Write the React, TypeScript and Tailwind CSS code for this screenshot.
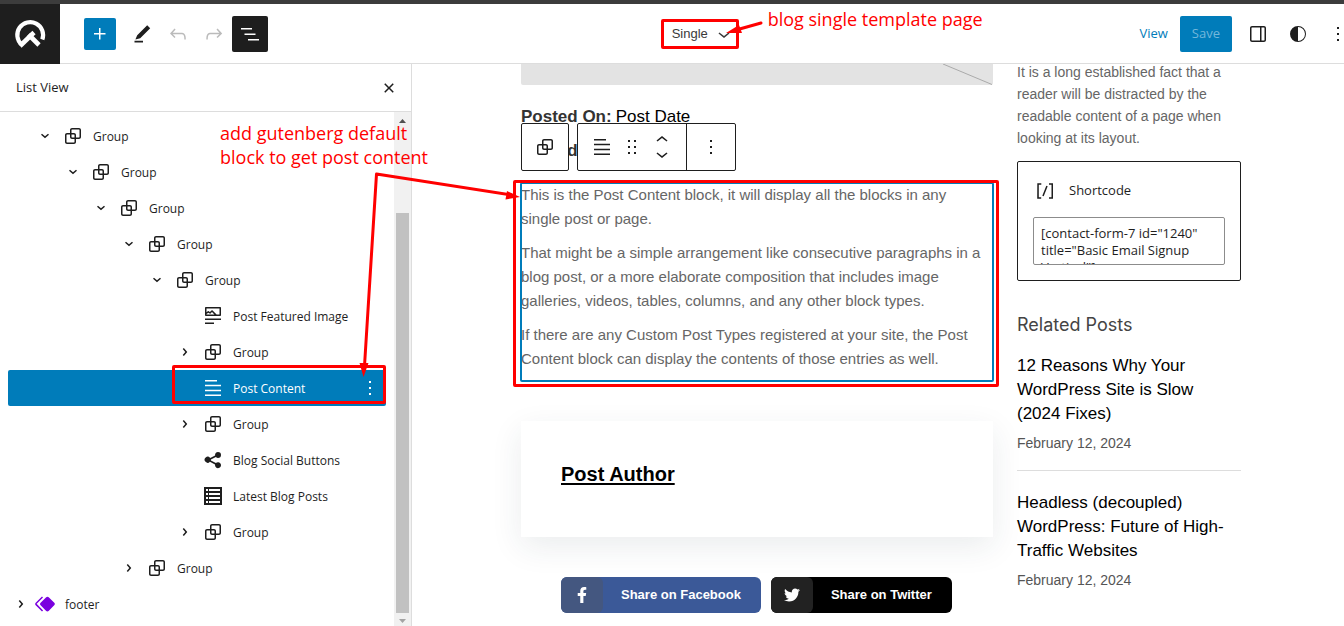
import type { ReactNode } from "react";
import { FaFacebookF, FaTwitter } from "react-icons/fa";

const paths = {
  group:
    "M18 4h-7c-1.1 0-2 .9-2 2v3H6c-1.1 0-2 .9-2 2v7c0 1.1.9 2 2 2h7c1.1 0 2-.9 2-2v-3h3c1.1 0 2-.9 2-2V6c0-1.1-.9-2-2-2zm-4.5 14c0 .3-.2.5-.5.5H6c-.3 0-.5-.2-.5-.5v-7c0-.3.2-.5.5-.5h3V13c0 1.1.9 2 2 2h2.5v3zm0-4.5H11c-.3 0-.5-.2-.5-.5v-2.5H13c.3 0 .5.2.5.5v2.5zm5-.5c0 .3-.2.5-.5.5h-3V11c0-1.1-.9-2-2-2h-2.5V6c0-.3.2-.5.5-.5h7c.3 0 .5.2.5.5v7z",
  content: "M4 20h16v-1.5H4V20zm0-4.8h16v-1.5H4v1.5zm0-6.4v1.5h16V8.8H4zM16 4H4v1.5h12V4z",
  featured:
    "M19 3H5c-.6 0-1 .4-1 1v7c0 .5.4 1 1 1h14c.5 0 1-.4 1-1V4c0-.6-.4-1-1-1zM5.5 10.5v-.4l1.8-1.3 1.3.8c.3.2.7.2.9-.1L11 8.1l2.4 2.4H5.5zm13 0h-2.9l-4-4c-.3-.3-.8-.3-1.1 0L8.9 8l-1.2-.8c-.3-.2-.6-.2-.9 0l-1.3 1V4.5h13v6zM4 20h9v-1.5H4V20zm0-4h16v-1.5H4V16z",
  symbol:
    "M21.3 10.8l-5.6-5.6c-.7-.7-1.8-.7-2.5 0l-5.6 5.6c-.7.7-.7 1.8 0 2.5l5.6 5.6c.3.3.8.5 1.2.5s.9-.2 1.2-.5l5.6-5.6c.8-.7.8-1.9.1-2.5zm-17.6 1L10 5.5l-1-1-6.3 6.3c-.7.7-.7 1.8 0 2.5L9 19.5l1.1-1.1-6.3-6.3c-.2 0-.2-.2-.1-.3z",
  share:
    "M17 4a3 3 0 0 1 0 6 3 3 0 0 1-2.1-.9l-5 2.5v.8l5 2.6A3 3 0 1 1 14 17v-.6l-5.1-2.7A3 3 0 1 1 9 9.8l.2.3 4.9-2.5A3 3 0 0 1 17 4z",
  table:
    "M3 3h18v18H3V3zm2 2v2h2V5H5zm3 0v2h11V5H8zM5 9v2h2V9H5zm3 0v2h11V9H8zm-3 4v2h2v-2H5zm3 0v2h11v-2H8zm-3 4v2h2v-2H5zm3 0v2h11v-2H8z",
  plus: "M11 12.5V17.5H12.5V12.5H17.5V11H12.5V6H11V11H6V12.5H11Z",
  edit: "m20.200 6.200-3-3-10 10-1.800 4.300 4.800-1.300L20.200 6.200Zm-7.200 12.500H4.500v1.800H13v-1.800Z",
  undo: "M18.3 11.7c-.6-.6-1.4-.9-2.3-.9H6.7l2.9-3.3-1.1-1-4.5 5L8.5 16l1-1-2.7-2.7H16c.5 0 .9.2 1.3.5 1 1 1 3.4 1 4.5v.3h1.5v-.2c0-1.5 0-4.3-1.5-5.7z",
  redo: "M15.6 6.5l-1.1 1 2.9 3.3H8c-.9 0-1.7.3-2.3.9-1.4 1.5-1.4 4.2-1.4 5.6v.2h1.5v-.3c0-1.1 0-3.5 1-4.5.3-.3.7-.5 1.3-.5h9.2L14.5 15l1.1 1.1 4.6-4.6-4.6-5z",
  list: "M3 6h11v1.5H3V6Zm3.5 5.5h11V13h-11v-1.5ZM21 17H10v1.5h11V17Z",
  close:
    "M12 13.06l3.712 3.713 1.061-1.06L13.061 12l3.712-3.712-1.06-1.06L12 10.938 8.288 7.227l-1.061 1.06L10.939 12l-3.712 3.712 1.06 1.061L12 13.061z",
  drag: "M8 7h2V5H8v2zm0 6h2v-2H8v2zm0 6h2v-2H8v2zm6-14v2h2V5h-2zm0 8h2v-2h-2v2zm0 6h2v-2h-2v2z",
  up: "M6.5 12.4L12 8l5.5 4.4-.9 1.2L12 10l-4.5 3.6-1-1.2z",
  down: "M17.5 11.6L12 16l-5.5-4.4.9-1.2L12 14l4.5-3.6 1 1.2z",
  more: "M13 19h-2v-2h2v2zm0-6h-2v-2h2v2zm0-6h-2V5h2v2z",
  right:
    "M10.86 8.04L14.28 12.03L10.86 16.02L9.72 15.04L12.3 12.03L9.72 9.02L10.86 8.04Z",
  smallDown:
    "M8.01 10.86L12 14.28L15.99 10.86L15.01 9.72L12 12.3L8.99 9.72L8.01 10.86Z",
  shortcode:
    "M16 4.2v1.5h2.5v12.5H16v1.5h4V4.2h-4zM4.2 19.8h4v-1.5H5.8V5.8h2.5V4.2h-4l-.1 15.6zm5.1-3.1l1.4.6 4-10-1.4-.6-4 10z",
  sidebar:
    "M18 4H6c-1.1 0-2 .9-2 2v12c0 1.1.9 2 2 2h12c1.1 0 2-.9 2-2V6c0-1.1-.9-2-2-2zm-4 14.5H6c-.3 0-.5-.2-.5-.5V6c0-.3.2-.5.5-.5h8v13zm4.5-.5c0 .3-.2.5-.5.5h-2.5v-13H18c.3 0 .5.2.5.5v12z",
  styles: "M12 4a8 8 0 1 0 0 16 8 8 0 0 0 0-16zm0 15V5a7 7 0 0 1 0 14z",
};

type IconName = keyof typeof paths;

function Icon({ name, className = "" }: { name: IconName; className?: string }) {
  return (
    <svg viewBox="0 0 24 24" className={`size-6 shrink-0 fill-current ${className}`} aria-hidden="true">
      <path fillRule="evenodd" d={paths[name]} />
    </svg>
  );
}

function IconButton({ name, label, className = "" }: { name: IconName; label: string; className?: string }) {
  return (
    <button type="button" aria-label={label} className={`flex items-center justify-center rounded-xs ${className}`}>
      <Icon name={name} />
    </button>
  );
}

function Header() {
  return (
    <header className="flex h-[60px] shrink-0 items-center justify-between border-b border-[#ddd] bg-white">
      <div className="flex items-center">
        <a href="#site" aria-label="Site" className="flex size-[60px] items-center justify-center bg-[#1e1e1e]">
          <svg viewBox="0 0 60 60" className="size-[60px]" fill="none" stroke="#fff" strokeWidth="4.2" aria-hidden="true">
            <path d="M21.500 40.500A12.900 12.900 0 1 1 42.300 35.500" />
            <path d="M20 42L34 28.500" strokeWidth="4.600" />
            <path d="M28.500 30.500L39 41" strokeWidth="4.600" />
          </svg>
        </a>
        <div className="flex items-center gap-2 pl-6">
          <IconButton name="plus" label="Add block" className="size-8 bg-[#007cba] text-white" />
          <div className="flex">
            <IconButton name="edit" label="Tools" className="size-9" />
            <IconButton name="undo" label="Undo" className="size-9 text-[#bbb]" />
            <IconButton name="redo" label="Redo" className="size-9 text-[#bbb]" />
            <IconButton name="list" label="List View" className="size-9 bg-[#1e1e1e] text-white" />
          </div>
        </div>
      </div>

      <div className="relative">
        <button
          type="button"
          className="flex h-[30px] items-center justify-between gap-1 rounded-xs border-3 border-[#f00] pl-2 font-['Liberation_Sans',sans-serif] text-[13px] text-[#3a3a3a]"
        >
          Single
          <Icon name="down" />
        </button>
        <p className="absolute bottom-[18px] left-[107px] whitespace-nowrap text-lg leading-6 text-[#f00]">
          blog single template page
        </p>
      </div>

      <div className="flex items-center text-[13px]">
        <a href="#view" className="px-2 text-[#007cba]">
          View
        </a>
        <button type="button" className="ml-1 h-9 rounded-xs bg-[#007cba] px-3 text-[#73b7da]">
          Save
        </button>
        <IconButton name="sidebar" label="Settings" className="ml-2 size-9" />
        <IconButton name="styles" label="Styles" className="ml-1 size-9" />
        <IconButton name="more" label="Options" className="-mr-1.5 ml-2.5 h-9 w-6" />
      </div>
    </header>
  );
}

type Row = {
  label: string;
  icon: IconName;
  indent: string;
  chevron?: "right" | "smallDown";
  selected?: boolean;
  footer?: boolean;
};

const rows: Row[] = [
  { label: "Group", icon: "group", indent: "pl-[25px]", chevron: "smallDown" },
  { label: "Group", icon: "group", indent: "pl-[53px]", chevron: "smallDown" },
  { label: "Group", icon: "group", indent: "pl-[81px]", chevron: "smallDown" },
  { label: "Group", icon: "group", indent: "pl-[109px]", chevron: "smallDown" },
  { label: "Group", icon: "group", indent: "pl-[137px]", chevron: "smallDown" },
  { label: "Post Featured Image", icon: "featured", indent: "pl-[165px]" },
  { label: "Group", icon: "group", indent: "pl-[165px]", chevron: "right" },
  { label: "Post Content", icon: "content", indent: "pl-[165px]", selected: true },
  { label: "Group", icon: "group", indent: "pl-[165px]", chevron: "right" },
  { label: "Blog Social Buttons", icon: "share", indent: "pl-[165px]" },
  { label: "Latest Blog Posts", icon: "table", indent: "pl-[165px]" },
  { label: "Group", icon: "group", indent: "pl-[165px]", chevron: "right" },
  { label: "Group", icon: "group", indent: "pl-[109px]", chevron: "right" },
  { label: "footer", icon: "symbol", indent: "pl-px", chevron: "right", footer: true },
];

function TreeRow({ row }: { row: Row }) {
  return (
    <li className={`relative flex h-9 items-center rounded-xs ${row.selected ? "bg-[#007cba] text-white" : ""}`}>
      <a href="#block" className={`flex flex-1 items-center ${row.indent}`}>
        <span className={`flex w-6 ${row.footer ? "" : "mr-1"}`}>{row.chevron && <Icon name={row.chevron} />}</span>
        <Icon name={row.icon} className={row.footer ? "text-[#7a00df]" : ""} />
        <span className="pt-px pl-2">{row.label}</span>
      </a>
      {row.selected && (
        <>
          <IconButton name="more" label="Options for Post Content" className="mr-1 size-6" />
          <span className="pointer-events-none absolute -top-[5px] right-0 bottom-0.5 left-41 rounded-xs border-3 border-[#f00]" />
        </>
      )}
    </li>
  );
}

function ListView() {
  return (
    <aside className="relative flex w-[412px] shrink-0 flex-col border-r border-[#ddd]">
      <div className="flex h-12 shrink-0 items-center justify-between border-b border-[#ddd] pr-2.5 pl-4">
        <h2>List View</h2>
        <IconButton name="close" label="Close" className="size-6" />
      </div>
      <div className="flex min-h-0 flex-1">
        <ul className="min-w-0 flex-1 overflow-hidden px-2 py-1.5 text-xs">
          {rows.map((row, i) => (
            <TreeRow key={i} row={row} />
          ))}
        </ul>
        <div className="flex w-[17px] flex-col items-center bg-[#f1f1f1]" aria-hidden="true">
          <svg viewBox="0 0 17 17" className="size-[17px] fill-[#505050]">
            <path d="M5 11h7L8.500 7z" />
          </svg>
          <span className="mt-auto h-7/9 w-[13px] bg-[#c1c1c1]" />
          <svg viewBox="0 0 17 13" className="h-[13px] w-[17px] fill-[#a3a3a3]">
            <path d="M5 6h7l-3.500 4z" />
          </svg>
        </div>
      </div>
      <p className="absolute top-[57px] left-55 z-10 whitespace-nowrap text-lg leading-6 text-[#f00]">
        add gutenberg default
        <br />
        block to get post content
      </p>
    </aside>
  );
}

function BlockToolbar() {
  return (
    <div className="absolute bottom-full left-0 mb-3 flex gap-2" role="toolbar" aria-label="Block tools">
      <div className="flex size-12 rounded-xs border border-[#1e1e1e] bg-white text-[#1e1e1e]">
        <IconButton name="group" label="Select parent block" className="flex-1" />
      </div>
      <div className="flex h-12 rounded-xs border border-[#1e1e1e] bg-white text-[#1e1e1e]">
        <div className="flex items-center border-r border-[#1e1e1e] px-3">
          <IconButton name="content" label="Post Content" className="size-6" />
          <IconButton name="drag" label="Drag" className="ml-1.5 size-6" />
          <div className="ml-1.5 flex flex-col">
            <button type="button" aria-label="Move up" className="flex h-3.5 items-center">
              <Icon name="up" />
            </button>
            <button type="button" aria-label="Move down" className="flex h-3.5 items-center">
              <Icon name="down" />
            </button>
          </div>
        </div>
        <IconButton name="more" label="Options" className="w-12" />
      </div>
    </div>
  );
}

function ShareLink({ icon, label, className, iconClass }: { icon: ReactNode; label: string; className: string; iconClass: string }) {
  return (
    <a href="#share" className={`flex h-9 items-center rounded-md text-[13px] font-bold text-white ${className}`}>
      <span className={`flex h-full w-[42px] items-center justify-center rounded-md ${iconClass}`}>{icon}</span>
      <span className="pr-5 pl-[18px]">{label}</span>
    </a>
  );
}

function PostColumn() {
  return (
    <main className="min-w-0">
      <div className="flex h-[21px] justify-end rounded-b-xs bg-[#e3e3e3]">
        <svg viewBox="0 0 52 21" className="h-[21px] w-13" aria-hidden="true">
          <path d="M2 0L51 20.500" stroke="#aaa" fill="none" />
        </svg>
      </div>
      <div className="mt-5 flex h-6 items-center gap-1 text-[17px] text-black">
        <strong className="text-[#333]">Posted On:</strong>
        <span>Post Date</span>
      </div>
      <div className="mt-2.5 flex h-6 items-center text-[17px]">
        <strong className="text-[#333]">Posted By:</strong>
      </div>
      <section className="relative mt-5 text-[15px] leading-6 text-[#666]">
        <p className="pr-6 pb-2.5">
          This is the Post Content block, it will display all the blocks in any single post or page.
        </p>
        <p className="pb-2.5">
          That might be a simple arrangement like consecutive paragraphs in a blog post, or a more elaborate
          composition that includes image galleries, videos, tables, columns, and any other block types.
        </p>
        <p className="pb-2.5">
          If there are any Custom Post Types registered at your site, the Post Content block can display the
          contents of those entries as well.
        </p>
        <span className="pointer-events-none absolute -inset-px rounded-xs border-2 border-[#007cba]" />
        <span className="pointer-events-none absolute -top-[3px] -right-1.5 -bottom-1.5 -left-2 rounded-xs border-3 border-[#f00]" />
        <BlockToolbar />
      </section>
      <section className="mt-10 bg-white px-10 py-10 shadow-[0_10px_30px_rgba(30,50,70,0.09)]">
        <h3 className="h-9 text-xl leading-[26px] font-bold text-black">
          <a href="#author" className="underline decoration-2 underline-offset-2">
            Post Author
          </a>
        </h3>
      </section>
      <div className="mt-10 flex gap-2.5 px-10 whitespace-nowrap">
        <ShareLink
          icon={<FaFacebookF className="size-4" />}
          label="Share on Facebook"
          className="bg-[#3b5998]"
          iconClass="bg-[#445780]"
        />
        <ShareLink
          icon={<FaTwitter className="size-4" />}
          label="Share on Twitter"
          className="bg-black"
          iconClass="bg-[#222]"
        />
      </div>
    </main>
  );
}

const posts = ["12 Reasons Why Your WordPress Site is Slow (2024 Fixes)", "Headless (decoupled) WordPress: Future of High-Traffic Websites"];

function SideColumn() {
  return (
    <aside className="-mt-[3px] min-w-0">
      <p className="text-sm leading-[22px] text-[#666]">
        It is a long established fact that a reader will be distracted by the readable content of a page when
        looking at its layout.
      </p>
      <div className="mt-3 rounded-xs border border-[#1e1e1e] p-[15px] font-['Open_Sans',sans-serif] text-[13px] text-[#1e1e1e]">
        <label htmlFor="shortcode" className="flex h-6 items-center gap-3 pt-1">
          <Icon name="shortcode" />
          <span className="font-medium">Shortcode</span>
        </label>
        <textarea
          id="shortcode"
          className="mt-4 block h-12 w-full resize-none overflow-hidden rounded-xs border border-[#8c8c8c] p-[7px] leading-[17px]"
          defaultValue={'[contact-form-7 id="1240" title="Basic Email Signup Vertical"]'}
        />
      </div>
      <h2 className="mt-8 font-['Inter',sans-serif] text-lg leading-6 text-[#444]">Related Posts</h2>
      <ul className="divide-y divide-[#ddd]">
        {posts.map((title) => (
          <li key={title} className="pt-5 pb-[15px] first:pt-[17px]">
            <h3 className="text-[17px] leading-6 text-black">
              <a href="#post">{title}</a>
            </h3>
            <p className="mt-[5px] text-sm leading-6 text-[#555]">February 12, 2024</p>
          </li>
        ))}
      </ul>
    </aside>
  );
}

function Arrows() {
  return (
    <svg className="pointer-events-none absolute top-0 left-0 z-20 h-[420px] w-[800px]" viewBox="0 0 800 420" aria-hidden="true">
      <g fill="none" stroke="#f00" strokeWidth="3">
        <path d="M364.500 366L376.500 174L512 195" strokeLinejoin="round" />
        <path d="M761 23L736 30" strokeLinecap="round" />
      </g>
      <g fill="#f00">
        <path d="M363.500 377l-4-14h9z" />
        <path d="M520 197l-13-6-1.500 8.500z" />
        <path d="M726 33l13-8 3 8z" />
      </g>
    </svg>
  );
}

export default function App() {
  return (
    <div className="relative flex h-screen flex-col overflow-hidden bg-white font-['Open_Sans',sans-serif] text-[13px] text-[#1e1e1e]">
      <div className="h-1 shrink-0 bg-[#3c3c3c]" />
      <Header />
      <div className="flex min-h-0 flex-1">
        <ListView />
        <div className="flex min-w-0 flex-1 justify-center overflow-hidden pl-1.5 font-['Liberation_Sans',sans-serif]">
          <div className="grid w-full max-w-[720px] grid-cols-[minmax(0,1fr)_224px] gap-6">
            <PostColumn />
            <SideColumn />
          </div>
        </div>
      </div>
      <Arrows />
    </div>
  );
}
